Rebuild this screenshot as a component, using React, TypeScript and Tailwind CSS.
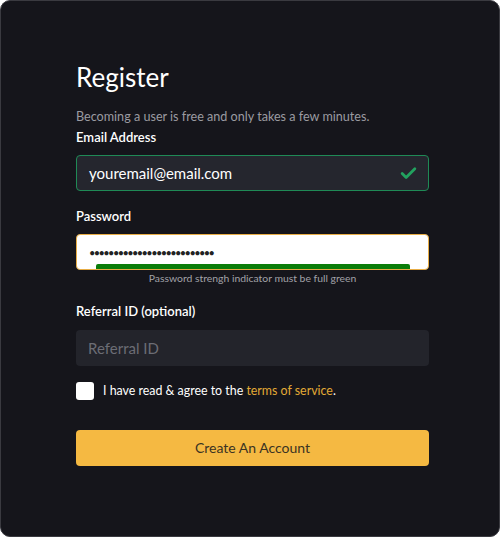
import React from 'react';
import { Check } from 'lucide-react';

export default function App() {
  return (
    <div className="w-[500px] h-[538px] bg-white font-['Lato',sans-serif]">
      <div className="w-[500px] h-[537px] bg-[#15151b] rounded-[10px] border border-[#3a3a40] pt-[60px]">
        <div className="ml-[75px] w-[353px] flex flex-col">
          <h1 className="text-[26px] leading-[32px] text-white">Register</h1>

          <p className="mt-[15px] text-[12.6px] leading-[18px] text-[#9b9ba1]">
            Becoming a user is free and only takes a few minutes.
          </p>

          {/* Email */}
          <label className="mt-[2px] text-[13px] leading-[18px] font-semibold text-white">Email Address</label>
          <div className="mt-[9px] h-[36px] rounded-[4px] border border-[#1f8a56] bg-[#25262e] flex items-center justify-between pl-[12px] pr-[10px]">
            <span className="text-[15px] text-white">youremail@email.com</span>
            <Check className="w-[19px] h-[19px] text-[#22a25f]" strokeWidth={3.5} />
          </div>

          {/* Password */}
          <label className="mt-[16px] text-[13px] leading-[18px] font-semibold text-white">Password</label>
          <div className="mt-[9px] h-[36px] rounded-[4px] border border-[#e8ad45] bg-white relative flex items-center pl-[12px]">
            <span className="text-[11px] tracking-[-1.6px] text-[#222] leading-none">
              ••••••••••••••••••••••••••
            </span>
            <div className="absolute left-[19px] right-[18px] bottom-0 h-[5px] rounded-t-[2px] bg-[#0a7d0a]" />
          </div>
          <p className="mt-[2px] text-center text-[10.4px] leading-[12px] text-[#a2a2a8]">
            Password strengh indicator must be full green
          </p>

          {/* Referral */}
          <label className="mt-[18px] text-[13px] leading-[18px] font-semibold text-white">Referral ID (optional)</label>
          <div className="mt-[10px] h-[36px] rounded-[4px] bg-[#23242b] flex items-center pl-[12px]">
            <span className="text-[15px] text-[#6c6d75]">Referral ID</span>
          </div>

          {/* Terms */}
          <div className="mt-[16px] flex items-center gap-[9px]">
            <div className="w-[18px] h-[18px] rounded-[3px] bg-white" />
            <span className="text-[12.4px] text-white">
              I have read &amp; agree to the <span className="text-[#e3aa35]">terms of service</span>.
            </span>
          </div>

          <button className="mt-[29px] h-[36px] rounded-[4px] bg-[#f5b942] text-[14px] text-[#3b3322]">
            Create An Account
          </button>
        </div>
      </div>
    </div>
  );
}
